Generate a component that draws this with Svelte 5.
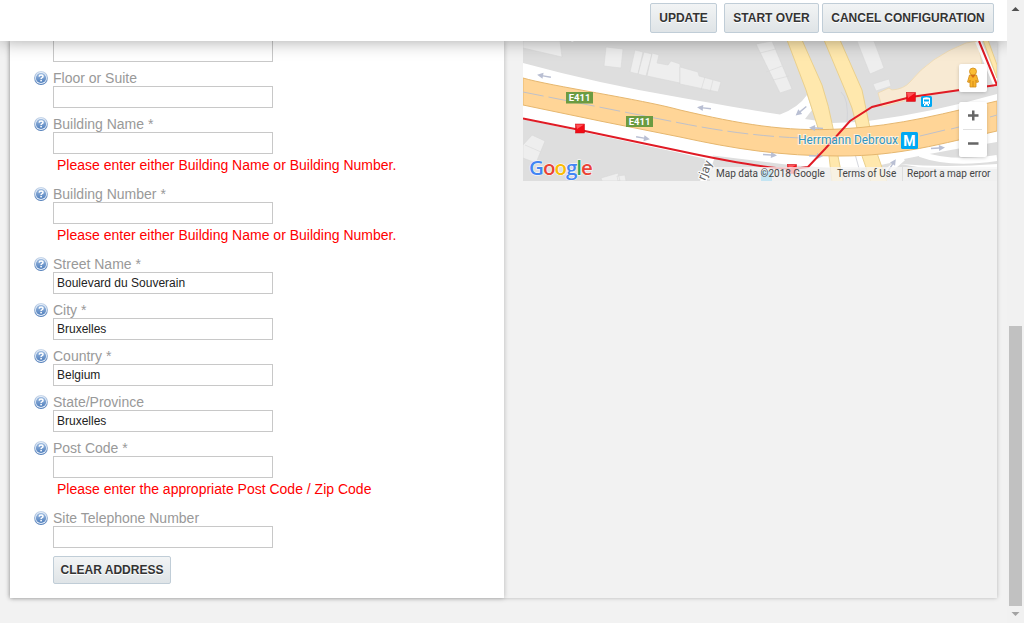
<script>
  const missing = 'Please enter either Building Name or Building Number.';
  const fields = [
    { label: 'Floor or Suite', value: '' },
    { label: 'Building Name *', value: '', error: missing },
    { label: 'Building Number *', value: '', error: missing },
    { label: 'Street Name *', value: 'Boulevard du Souverain' },
    { label: 'City *', value: 'Bruxelles' },
    { label: 'Country *', value: 'Belgium' },
    { label: 'State/Province', value: 'Bruxelles' },
    { label: 'Post Code *', value: '', error: 'Please enter the appropriate Post Code / Zip Code' },
    { label: 'Site Telephone Number', value: '' }
  ];
  // Direction arrows on the map: x, y, rotation
  const arrows = [
    [544, 76, 190], [643, 138, 10], [704, 108, 186], [801, 111, 140],
    [816, 128, 183], [770, 155, 4], [816, 156, 2], [938, 148, -4], [892, 165, -57]
  ];
</script>

<div class="window">
  <div class="page">
    <header>
      <button class="btn update">UPDATE</button>
      <button class="btn start">START OVER</button>
      <button class="btn cancel">CANCEL CONFIGURATION</button>
    </header>
    <main>
      <section class="form">
        <div class="cut"></div>
        {#each fields as f}
          <div class="field">
            <svg class="help" viewBox="0 0 14 14" width="14" height="14">
              <defs>
                <linearGradient id="ball" x1="0" y1="0" x2="0" y2="1">
                  <stop offset="0" stop-color="#9dbbe0" /><stop offset="1" stop-color="#4f7ebc" />
                </linearGradient>
                <linearGradient id="ring" x1="0" y1="0" x2="0" y2="1">
                  <stop offset="0" stop-color="#cbd9eb" /><stop offset="1" stop-color="#4f7cb8" />
                </linearGradient>
              </defs>
              <circle cx="7" cy="7" r="6.9" fill="url(#ring)" />
              <circle cx="7" cy="7" r="5.9" fill="#e8f0fa" />
              <circle cx="7" cy="7" r="5.1" fill="url(#ball)" />
              <path d="M5.1 5.6Q5.2 4 7.1 4Q9 4 9 5.5Q9 6.5 7.8 6.9Q7.1 7.2 7.1 8.1" fill="none" stroke="#fff" stroke-width="1.5" />
              <rect x="6.3" y="8.9" width="1.6" height="1.5" fill="#fff" />
            </svg>
            <div class="col">
              <label for={f.label}>{f.label}</label>
              <input id={f.label} value={f.value} />
              {#if f.error}<div class="error">{f.error}</div>{/if}
            </div>
          </div>
        {/each}
        <button class="btn clear">CLEAR ADDRESS</button>
      </section>
      <section class="side">
        <div class="map">
          <svg viewBox="523 41 474 140" width="474" height="140">
            <rect x="523" y="41" width="474" height="140" fill="#dedede" />
            <g fill="#eeeeee" stroke="#d8d8d8" stroke-width=".6">
              <path d="M523 41H560L562 57L523 48Z" />
              <path d="M606 47L623 49L621 68L604 66Z" />
              <path d="M635 50L643 52L638 74L630 72ZM644 52L652 54L646 76L638 74ZM652 53L659 55L657 63L668 65L671 61L680 64V83L647 76Z" />
              <path d="M680 67L698 72L699 76L721 82L718 92L680 84ZM705 77L701 90M713 80L710 92" />
              <path d="M756 44L772 41L792 89L780 93ZM760 53L776 49M766 72L782 66M773 80L789 76" />
              <path d="M857 41H874L884 68L870 74ZM873 84L889 79L891 86L876 91Z" />
              <path d="M532 135L545 141L536 163L523 158V145ZM525 145L541 152M601 178L618 173L620 181H602ZM617 176L625 175L626 181H618Z" />
            </g>
            <path d="M878 93L889 88L892 90Q904 89 910 82Q930 57 966 43L978 41L985 84L911 99L882 107Z" fill="#f8ead3" stroke="#efd9ae" stroke-width=".8" />
            <path d="M571 41L572 42L574 41" fill="#fff" />
            <path d="M841 92Q849 98 847 124" fill="none" stroke="#cfd1d6" stroke-width=".8" />
            <!-- carriageway casing -->
            <path d="M523 63Q600 84 680 97.500Q750 110 780 114.500Q798 108 807 95L812 110L805 119L833 123L857 122L868 121Q930 113 997 94V142Q948 150 904 159Q870 170 840 169L790 165L713 155.500L710 160L680 153L523 119Z" fill="#fff" />
            <path d="M978 41L997 86M712 156L703 182M903 158L873 184M920 154Q950 165 997 158" fill="none" stroke="#fff" stroke-width="6" />
            <path d="M900 164Q945 168 997 164V169Q940 172 900 164Z" fill="#fff" />
            <path d="M855 154L860 172" stroke="#c9ccd4" stroke-width=".8" />
            <g fill="#ffe8ad" stroke="#ead08d" stroke-width="1">
              <path d="M787 40L802 40L822 85Q829 106 833 128L838 156L843 182H832L829 156L818 128L806 90Z" />
              <path d="M824 40H840L862 90L870 128L878 156L887 182H871L862 156L857 128Q853 107 845 90Z" />
              <path d="M983 40L997 78V65L988 40Z" />
            </g>
            <path d="M523 78C550 86 640 99 680 110C740 124 785 132 840 129C900 126 950 112 997 101V131C940 144 900 156 840 156C780 156 735 149 680 137L600 121L523 105Z" fill="#ffd597" stroke="#e6b76f" stroke-width="1" />
            <path d="M523 92L680 123Q745 136 802 138" fill="none" stroke="#bfc1ca" stroke-width="1" stroke-dasharray="21 5" />
            <path d="M920 136L945 130M951 129L963 126M990 117L997 115" fill="none" stroke="#bfc1ca" />
            {#each arrows as a}
              <path transform="translate({a[0]} {a[1]}) rotate({a[2]})" d="M-7 -.7H1V-3L7 0L1 3V.7H-7Z" fill="#b9bfd3" />
            {/each}
            <path d="M523 118.500L580 130L680 151Q740 164 776 168L793 169L808 167L825 149L850 121L872 107L911 97L960 90L997 85L979 41" fill="none" stroke="#e01b25" stroke-width="2" />
            <g fill="#f20c16" stroke="#c80e17" stroke-width=".5">
              <rect x="575.500" y="124" width="9" height="9" /><rect x="906.500" y="92.500" width="9" height="9" /><rect x="787.500" y="164.500" width="9" height="9" />
            </g>
            <path d="M576 124.500H584L577 129ZM907 93H915L908 98ZM788 165H796L789 169Z" fill="#ff5459" />
            <g font-family="Roboto, sans-serif" font-weight="700" font-size="9.500" fill="#fff" text-anchor="middle">
              <rect x="566" y="92" width="27" height="11.500" fill="#6b9b41" /><text x="579.500" y="101.200">E411</text>
              <rect x="626" y="116" width="27" height="11" fill="#6b9b41" /><text x="639.500" y="125">E411</text>
            </g>
            <text x="798" y="144" textLength="100" font-family="Roboto, sans-serif" font-size="12" fill="#3295bf" stroke="#ffffff" stroke-opacity=".65" stroke-width="2" paint-order="stroke">Herrmann Debroux</text>
            <rect x="901" y="132" width="17" height="17" rx="1.500" fill="#00a8f3" />
            <text x="909.500" y="145.500" text-anchor="middle" font-family="Roboto, sans-serif" font-weight="700" font-size="14" fill="#fff">M</text>
            <g>
              <rect x="921" y="96" width="11" height="11" rx="1.500" fill="#00a8f3" />
              <path d="M923 98Q926.500 96.500 930 98V104H929V106H927.500V104.500H925.500V106H924V104H923Z" fill="#fff" />
              <path d="M924 99.500H929V101.500H924ZM924 102.800h1v1h-1zM928 102.800h1v1h-1z" fill="#00a8f3" />
            </g>
            <rect x="761" y="171" width="11" height="10" fill="#32b3ec" />
            <text transform="translate(705 181) rotate(-68)" font-family="Roboto, sans-serif" font-size="12.500" fill="#666" stroke="#fff" stroke-width="2" paint-order="stroke">rjay</text>
          </svg>
          <div class="logo"><b>G</b><b class="r">o</b><b class="y">o</b><b>g</b><b class="g">l</b><b class="r">e</b></div>
          <div class="legal"><span class="data">Map data ©2018 Google</span><span class="terms">Terms of Use</span><span class="report">Report a map error</span></div>
          <div class="man">
            <svg viewBox="0 0 14 22" width="14" height="22">
              <path d="M3.500 8Q7 7 10.500 8L12.500 15L10.500 15.500L10 13V20H4V13L3.500 15.500L1.500 15Z" fill="#f9b42b" stroke="#d18a18" stroke-width=".8" />
              <circle cx="7" cy="4.500" r="3.500" fill="#fbbd34" stroke="#d18a18" stroke-width=".8" />
              <path d="M4.500 8H9.500L7 11Z" fill="#d46d16" /><path d="M7 14V20" stroke="#d18a18" />
            </svg>
          </div>
          <div class="zoom">
            <svg viewBox="0 0 28 55" width="28" height="55">
              <path d="M9 13.500H19.500M14.250 8.500V18.500M9 41.500H19.500" stroke="#666" stroke-width="2.500" />
              <path d="M4 27.500H23" stroke="#e1e1e1" />
            </svg>
          </div>
        </div>
      </section>
    </main>
  </div>
  <aside class="scroll">
    <svg viewBox="0 0 17 17" width="17" height="17"><path d="M4.500 11H12.500L8.500 7Z" fill="#505050" /></svg>
    <div class="thumb"></div>
    <svg viewBox="0 0 17 17" width="17" height="17"><path d="M4.500 6H12.500L8.500 10Z" fill="#a3a3a3" /></svg>
  </aside>
</div>

<style>
  :global(body) { margin: 0; overflow: hidden; }
  .window { display: flex; width: 1024px; height: 623px; background: #f2f2f2; font-family: "Liberation Sans", Arial, sans-serif; overflow: hidden; }
  .page { width: 1007px; height: 623px; display: flex; flex-direction: column; overflow: hidden; }
  header { position: relative; z-index: 5; box-sizing: border-box; flex: none; height: 41px; padding: 3px 13px 0 0; background: #fff; display: flex; justify-content: flex-end; align-items: flex-start; box-shadow: 0 0 18px rgba(0,0,0,.36); }
  .btn { box-sizing: border-box; border: 1px solid #c0cdd7; border-radius: 2px; background: linear-gradient(#f2f4f5, #dfe4e7); color: #333; font: bold 12px "Liberation Sans", Arial, sans-serif; letter-spacing: 0; text-shadow: 0 1px 0 #fff; padding: 0; white-space: nowrap; text-align: center; }
  header .btn { height: 30px; }
  .update { width: 67px; margin-right: 7px; }
  .start { width: 95px; margin-right: 3px; }
  .cancel { width: 172px; }
  main { display: flex; margin-left: 10px; width: 987px; height: 557px; flex: none; box-shadow: 0 0 4px rgba(0,0,0,.25); }
  .form { box-sizing: border-box; width: 494px; padding-left: 24px; background: #fff; box-shadow: 0 0 5px rgba(0,0,0,.25); }
  .cut { box-sizing: border-box; margin-left: 19px; width: 220px; height: 21px; border: 1px solid #c8c8c8; border-top: 0; }
  .field { display: flex; gap: 5px; margin-top: 8px; }
  .help { flex: none; margin-top: 1px; }
  .col { display: flex; flex-direction: column; }
  label { height: 16px; line-height: 16px; font-size: 14px; color: #999; white-space: nowrap; }
  input { box-sizing: border-box; width: 220px; height: 22px; border: 1px solid #c8c8c8; padding: 0 3px; margin: 0; font: 12px "Liberation Sans", Arial, sans-serif; color: #222; background: #fff; border-radius: 0; outline: none; }
  .error { padding: 3px 0 0 4px; height: 21px; line-height: 17px; font-size: 14px; color: #f00; white-space: nowrap; }
  .clear { margin: 8px 0 0 19px; width: 118px; height: 28px; display: block; }
  .side { width: 493px; padding-left: 19px; box-sizing: border-box; }
  .map { position: relative; width: 474px; height: 140px; overflow: hidden; }
  .map svg { display: block; }
  .logo { position: absolute; left: 6px; top: 113px; font: 500 20.500px/26px "Open Sans", Roboto, sans-serif; letter-spacing: -1px; -webkit-text-stroke: 1px #fff; paint-order: stroke; display: flex; }
  .logo b { font-weight: 600; color: #4285f4; }
  .logo .r { color: #ea4335; }
  .logo .y { color: #fbbc05; }
  .logo .g { color: #34a853; }
  .legal { position: absolute; right: 0; bottom: 0; display: flex; height: 14px; font: 10px/14px Roboto, sans-serif; color: #444; white-space: nowrap; }
  .legal span { box-sizing: border-box; background: rgba(245,245,245,.75); padding-left: 6px; }
  .data { width: 122px; }
  .legal .terms { width: 70px; padding-left: 5px; }
  .legal .report { width: 95px; border-left: 1px solid #ddd; padding-left: 4px; }
  .man, .zoom { position: absolute; left: 436px; width: 28px; background: #fff; border-radius: 2px; box-shadow: 0 1px 4px -1px rgba(0,0,0,.3); }
  .man { top: 23px; height: 28px; display: grid; place-items: center; }
  .zoom { top: 61px; height: 55px; }
  .scroll { width: 17px; height: 623px; background: #f1f1f1; display: flex; flex-direction: column; position: relative; z-index: 6; }
  .scroll svg { display: block; flex: none; }
  .thumb { margin: 309px 0 0 2px; width: 13px; height: 280px; background: #c1c1c1; }
</style>
